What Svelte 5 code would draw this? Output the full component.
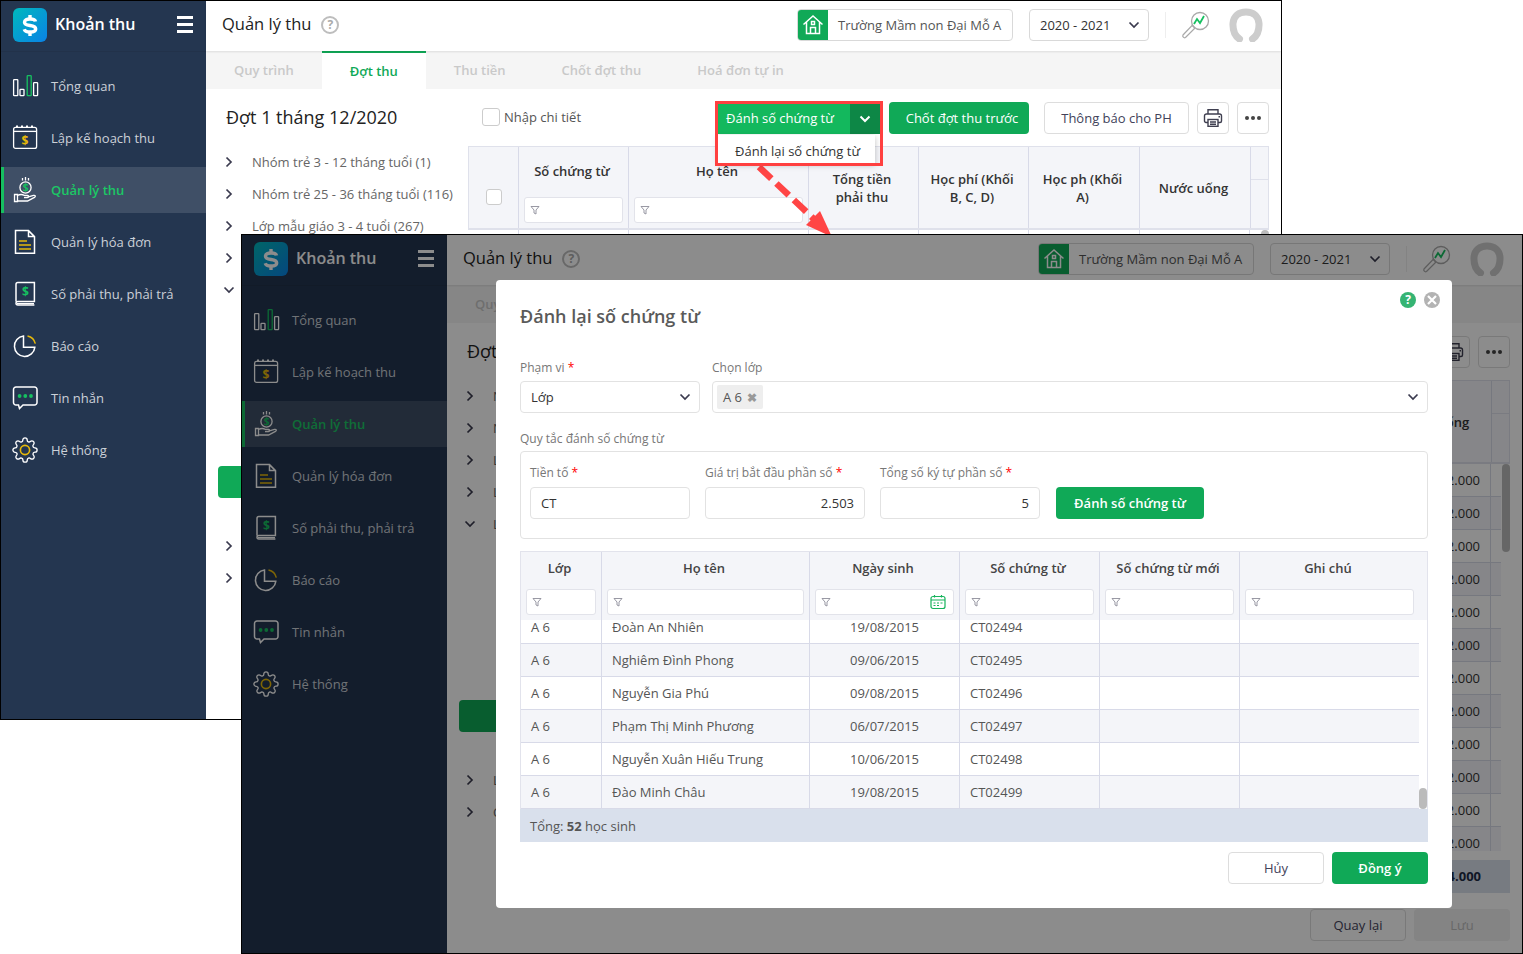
<script>
  const menu = [
    ['bars', 'Tổng quan'],
    ['plan', 'Lập kế hoạch thu'],
    ['hand', 'Quản lý thu'],
    ['doc', 'Quản lý hóa đơn'],
    ['book', 'Số phải thu, phải trả'],
    ['pie', 'Báo cáo'],
    ['chat', 'Tin nhắn'],
    ['gear', 'Hệ thống']
  ];
  const tabs = ['Quy trình', 'Đợt thu', 'Thu tiền', 'Chốt đợt thu', 'Hoá đơn tự in'];
  const treeTop = [
    'Nhóm trẻ 3 - 12 tháng tuổi (1)',
    'Nhóm trẻ 25 - 36 tháng tuổi (116)',
    'Lớp mẫu giáo 3 - 4 tuổi (267)',
    'Lớp mẫu giáo 4 - 5 tuổi (289)'
  ];
  const treeKids = ['A 1', 'A 2', 'A 3', 'A 4', 'A 5', 'A 6', 'A 7'];
  const treeEnd = ['Lớp ghép (12)', 'Chưa xếp lớp (3)'];
  const bodyRows = Array.from({ length: 12 }, (_, i) => i);
  const students = [
    ['Đoàn An Nhiên', '19/08/2015', 'CT02494'],
    ['Nghiêm Đình Phong', '09/06/2015', 'CT02495'],
    ['Nguyễn Gia Phú', '09/08/2015', 'CT02496'],
    ['Phạm Thị Minh Phương', '06/07/2015', 'CT02497'],
    ['Nguyễn Xuân Hiếu Trung', '10/06/2015', 'CT02498'],
    ['Đào Minh Châu', '19/08/2015', 'CT02499']
  ];
  const modalCols = ['Lớp', 'Họ tên', 'Ngày sinh', 'Số chứng từ', 'Số chứng từ mới', 'Ghi chú'];
</script>

{#snippet chevron(dir)}
  <svg class="chev" width="12" height="12" viewBox="0 0 12 12">
    {#if dir === 'right'}
      <polyline points="3.5,1.5 8,6 3.5,10.5" />
    {:else}
      <polyline points="1.5,3.5 6,8 10.5,3.5" />
    {/if}
  </svg>
{/snippet}

{#snippet funnel()}
  <svg class="funnel" width="10" height="10" viewBox="0 0 10 10">
    <polygon points="1,1.5 9,1.5 6,5 6,9 4,8 4,5" />
  </svg>
{/snippet}

{#snippet icon(n)}
  <svg class="mi" width="28" height="28" viewBox="0 0 28 28" fill="none" stroke="#fff" stroke-width="1.3">
    {#if n === 'bars'}
      <rect x="2.6" y="7.6" width="4.2" height="16" rx=".6" />
      <rect x="9" y="17.4" width="4" height="6.2" rx=".6" />
      <rect x="16.2" y="3.6" width="4" height="20" rx=".6" stroke="#16c060" />
      <rect x="22.6" y="10.6" width="4" height="13" rx=".6" />
    {:else if n === 'plan'}
      <rect x="2.6" y="3.4" width="23" height="21" rx="2" />
      <line x1="2.6" y1="7.4" x2="25.6" y2="7.4" />
      <line x1="5" y1="2.4" x2="23" y2="2.4" stroke-dasharray="2 3" stroke-width="2" />
      <text x="14" y="20.6" class="sym" fill="#e5b80b" stroke="none">$</text>
    {:else if n === 'hand'}
      <circle cx="14.5" cy="11.5" r="5.6" />
      <text x="14.5" y="15" class="sym small" fill="#16c060" stroke="none">$</text>
      <path d="M11.5 4.6V2M14.5 4.6V1M17.5 4.6V2" />
      <path d="M3.5 18.5h3v7h-3zM6.5 19.5c3-1.6 5-1.2 7 0h3c1.6 0 1.6 2.2 0 2.2h-3.5M16.5 21.2l6-1.8c1.8-.4 2.5 1 1 2l-7 3.6h-10" />
    {:else if n === 'doc'}
      <path d="M4.5 2.6h13l6 6v16.6h-19zM17.5 2.6v6h6" stroke-width="1.5" />
      <path d="M8 13h8M8 17h12M8 21h12" stroke="#e5b80b" stroke-width="1.5" />
    {:else if n === 'book'}
      <path d="M5 21.6V4.5c0-1 .7-1.9 1.8-1.9h16.6v19H6.8c-2.4 0-2.4 3.4 0 3.4h16.6" stroke-width="1.5" />
      <path d="M6 23.6h17" />
      <text x="14.4" y="15.6" class="sym" fill="#16c060" stroke="none">$</text>
    {:else if n === 'pie'}
      <path d="M12.5 4.1a10.2 10.2 0 1 0 11.3 11.2H12.5z" stroke-width="1.5" />
      <path d="M16.5 3.9a10 10 0 0 1 7.8 7.8" stroke="#e5b80b" stroke-width="1.5" />
    {:else if n === 'chat'}
      <path d="M5 3h18.5a2.5 2.5 0 0 1 2.5 2.5v13a2.5 2.5 0 0 1-2.5 2.5H12l-3.5 3.5-1-3.5H5a2.5 2.5 0 0 1-2.5-2.5v-13A2.5 2.5 0 0 1 5 3z" stroke-width="1.5" />
      <circle cx="8.6" cy="12" r="1.9" fill="#16c060" stroke="none" />
      <circle cx="14.3" cy="12" r="1.9" fill="#16c060" stroke="none" />
      <circle cx="20" cy="12" r="1.9" fill="#16c060" stroke="none" />
    {:else}
      <g transform="translate(.8 .8) scale(1.1)">
        <path stroke-width="1.2" d="M19.4 15a1.65 1.65 0 0 0 .33 1.82l.06.06a2 2 0 0 1 0 2.83 2 2 0 0 1-2.83 0l-.06-.06a1.65 1.65 0 0 0-1.82-.33 1.65 1.65 0 0 0-1 1.51V21a2 2 0 0 1-2 2 2 2 0 0 1-2-2v-.09A1.65 1.65 0 0 0 9 19.4a1.65 1.65 0 0 0-1.82.33l-.06.06a2 2 0 0 1-2.83 0 2 2 0 0 1 0-2.83l.06-.06a1.65 1.65 0 0 0 .33-1.82 1.65 1.65 0 0 0-1.51-1H3a2 2 0 0 1-2-2 2 2 0 0 1 2-2h.09A1.65 1.65 0 0 0 4.6 9a1.65 1.65 0 0 0-.33-1.82l-.06-.06a2 2 0 0 1 0-2.83 2 2 0 0 1 2.83 0l.06.06a1.65 1.65 0 0 0 1.82.33H9a1.65 1.65 0 0 0 1-1.51V3a2 2 0 0 1 2-2 2 2 0 0 1 2 2v.09a1.65 1.65 0 0 0 1 1.51 1.65 1.65 0 0 0 1.82-.33l.06-.06a2 2 0 0 1 2.83 0 2 2 0 0 1 0 2.83l-.06.06a1.65 1.65 0 0 0-.33 1.82V9a1.65 1.65 0 0 0 1.51 1H21a2 2 0 0 1 2 2 2 2 0 0 1-2 2h-.09a1.65 1.65 0 0 0-1.51 1z" />
        <circle cx="12" cy="12" r="4.2" stroke="#e5b80b" stroke-width="1.5" />
      </g>
    {/if}
  </svg>
{/snippet}

{#snippet appWindow(front)}
  <div class="side">
    <div class="brand">
      <div class="logo">
        <svg width="34" height="34" viewBox="0 0 34 34" fill="none" stroke="#fff" stroke-width="3.4">
          <path d="M22.5 13.5c-.3-1.500-2.200-2.500-5.500-2.500-3.200 0-5.500 1-5.500 3.200 0 4.800 11.200 1.800 11.200 6.700 0 2.200-2.500 3.100-5.700 3.100-3 0-5.200-1-5.800-2.800" />
          <path d="M17 7v4M17 24v4" />
        </svg>
      </div>
      <span class="brand-name">Khoản thu</span>
      <div class="burger"><i></i><i></i><i></i></div>
    </div>
    <nav class="menu">
      {#each menu as m, i}
        <div class="item" class:on={i === 2}>
          {@render icon(m[0])}
          <span>{m[1]}</span>
        </div>
      {/each}
    </nav>
  </div>

  <div class="main">
    <header class="top">
      <span class="page-title">Quản lý thu</span>
      <span class="q">?</span>
      <div class="spacer"></div>
      <div class="school">
        <div class="home">
          <svg width="22" height="22" viewBox="0 0 22 22" fill="none" stroke="#fff" stroke-width="1.5">
            <path d="M1.5 10.5 11 2l9.500 8.500M4.500 8v11.500h13V8" />
            <path d="M8.500 19.500v-6h5v6" />
            <rect x="9.500" y="7.500" width="3" height="3" />
          </svg>
        </div>
        <span>Trường Mầm non Đại Mỗ A</span>
      </div>
      <div class="year"><span>2020 - 2021</span>{@render chevron('down')}</div>
      <div class="vline"></div>
      <svg class="analyze" width="30" height="30" viewBox="0 0 30 30" fill="none">
        <circle cx="19" cy="11" r="8.500" stroke="#a9a9a9" stroke-width="1.3" />
        <polyline points="13,14 16,9 19,13 23,6" stroke="#16c060" stroke-width="1.8" />
        <path d="M13 17l-2-1.500-9 9.500c-1 1.500 1 3.500 2.500 2.500L13.500 18.500z" stroke="#a9a9a9" stroke-width="1.2" />
      </svg>
      <svg class="avatar" width="34" height="34" viewBox="0 0 34 34" fill="none">
        <path d="M10.500 31C4.500 27 3.800 20 4 15.500 4.500 8 10 4 17 4s12.500 4 13 11.500c.2 4.500-.5 11.500-6.500 15.500" stroke="#cdcdcd" stroke-width="7" stroke-linecap="round" />
      </svg>
    </header>

    <div class="tabs">
      {#each tabs as t, i}
        <div class="tab" class:active={i === 1}>{t}</div>
      {/each}
    </div>

    <div class="toolbar">
      <div class="round-name">Đợt 1 tháng 12/2020</div>
      <label class="check"><i class="box"></i>Nhập chi tiết</label>
      <div class="spacer"></div>
      <div class="split">
        <div class="split-main">Đánh số chứng từ</div>
        <div class="split-arrow">
          <svg width="12" height="12" viewBox="0 0 12 12" fill="none" stroke="#fff" stroke-width="2"><polyline points="1.5,3.5 6,8 10.5,3.5" /></svg>
        </div>
        {#if !front}
          <div class="dropdown">Đánh lại số chứng từ</div>
          <div class="redbox"></div>
        {/if}
      </div>
      <button class="btn green prev">Chốt đợt thu trước</button>
      <button class="btn ghost notify">Thông báo cho PH</button>
      <button class="btn ghost square">
        <svg width="20" height="20" viewBox="0 0 20 20" fill="none" stroke="#3f3f50" stroke-width="1.4">
          <path d="M5 6V1.700h10V6" />
          <path d="M5 14.500H3A1.500 1.500 0 0 1 1.500 13V8A2 2 0 0 1 3.500 6h13a2 2 0 0 1 2 2v5a1.500 1.500 0 0 1-1.500 1.500h-2" />
          <rect x="5" y="11.500" width="10" height="6.800" />
          <path d="M7 14h6M7 16.200h6M15.500 8.800h1.500" />
        </svg>
      </button>
      <button class="btn ghost square dots"><i></i><i></i><i></i></button>
    </div>

    <div class="work">
      <div class="tree">
        {#each treeTop as t}
          <div class="node">{@render chevron('right')}<span>{t}</span></div>
        {/each}
        <div class="node">{@render chevron('down')}<span>Lớp mẫu giáo 5 - 6 tuổi (301)</span></div>
        {#each treeKids as k, i}
          <div class="kid" class:sel={i === 5}><span>{k}</span></div>
        {/each}
        {#each treeEnd as t}
          <div class="node">{@render chevron('right')}<span>{t}</span></div>
        {/each}
      </div>

      <div class="grid-wrap">
        <div class="mt">
          <div class="mt-head">
            <div class="th c-mid first-col"><i class="box small"></i></div>
            <div class="th stack"><b>Số chứng từ</b><div class="filter">{@render funnel()}</div></div>
            <div class="th stack"><b>Họ tên</b><div class="filter">{@render funnel()}</div></div>
            <div class="th c-mid"><b>Tổng tiền<br />phải thu</b></div>
            <div class="th c-mid"><b>Học phí (Khối<br />B, C, D)</b></div>
            <div class="th c-mid"><b>Học ph (Khối<br />A)</b></div>
            <div class="th c-mid"><b>Nước uống</b></div>
            <div class="th gutter"><i></i></div>
          </div>
          <div class="mt-body">
            <div class="mt-rows">
              {#each bodyRows as r}
                <div class="mt-row" class:zebra={r % 2 === 1}>
                  <div></div><div></div><div></div><div></div><div></div><div></div>
                  <div class="num">132.000</div>
                </div>
              {/each}
            </div>
            <div class="mt-thumb"></div>
          </div>
          <div class="mt-foot"><b>1.584.000</b></div>
        </div>
        <div class="page-actions">
          <button class="btn ghost wide">Quay lại</button>
          <button class="btn muted wide">Lưu</button>
        </div>
      </div>
    </div>
  </div>
{/snippet}

<div class="desk">
  <section class="win first">
    {@render appWindow(false)}
    <svg class="arrow" width="100" height="90" viewBox="0 0 100 90" fill="none">
      <line x1="5" y1="2" x2="62" y2="56" stroke="#ff4545" stroke-width="6.5" stroke-dasharray="17 7" />
      <polygon points="78,72 52,60 66,46" fill="#ff4545" />
    </svg>
  </section>

  <section class="win second">
    {@render appWindow(true)}
    <div class="overlay">
      <div class="modal">
        <div class="modal-icons">
          <span class="mi-help">?</span>
          <span class="mi-close">
            <svg width="10" height="10" viewBox="0 0 10 10" stroke="#fff" stroke-width="2.2"><path d="M1 1l8 8M9 1l-8 8" /></svg>
          </span>
        </div>
        <h2>Đánh lại số chứng từ</h2>

        <div class="form-row">
          <div class="f scope">
            <div class="lbl">Phạm vi <em>*</em></div>
            <div class="ctl select"><span>Lớp</span>{@render chevron('down')}</div>
          </div>
          <div class="f classes">
            <div class="lbl">Chọn lớp</div>
            <div class="ctl select tags">
              <span class="tag">A 6 <b>✖</b></span>
              {@render chevron('down')}
            </div>
          </div>
        </div>

        <div class="lbl rule-lbl">Quy tắc đánh số chứng từ</div>
        <div class="rule">
          <div class="f wide160">
            <div class="lbl">Tiền tố <em>*</em></div>
            <div class="ctl"><span>CT</span></div>
          </div>
          <div class="f wide160">
            <div class="lbl">Giá trị bắt đầu phần số <em>*</em></div>
            <div class="ctl end"><span>2.503</span></div>
          </div>
          <div class="f wide160">
            <div class="lbl">Tổng số ký tự phần số <em>*</em></div>
            <div class="ctl end"><span>5</span></div>
          </div>
          <button class="btn green number">Đánh số chứng từ</button>
        </div>

        <div class="st">
          <div class="st-head">
            {#each modalCols as c, i}
              <div class="st-th">
                <b>{c}</b>
                <div class="filter">
                  {@render funnel()}
                  {#if i === 2}
                    <svg class="cal" width="16" height="16" viewBox="0 0 16 16" fill="none" stroke="#16b35c" stroke-width="1.2">
                      <rect x="1" y="2.500" width="14" height="12" rx="2" />
                      <path d="M1 6h14M4.500 1v2.500M11.500 1v2.500" />
                      <path d="M3.500 9h2M7 9h2M10.500 9h2M3.500 11.500h2M7 11.500h2" />
                    </svg>
                  {/if}
                </div>
              </div>
            {/each}
          </div>
          <div class="st-body">
            <div class="st-rows">
              {#each students as s, i}
                <div class="st-row" class:zebra={i % 2 === 1}>
                  <div>A 6</div>
                  <div>{s[0]}</div>
                  <div class="mid">{s[1]}</div>
                  <div>{s[2]}</div>
                  <div></div>
                  <div></div>
                </div>
              {/each}
            </div>
            <div class="st-thumb"></div>
          </div>
          <div class="st-foot">Tổng: <b>52</b> học sinh</div>
        </div>

        <div class="modal-actions">
          <button class="btn ghost wide">Hủy</button>
          <button class="btn green wide strong">Đồng ý</button>
        </div>
      </div>
    </div>
  </section>
</div>

<style>
  :global(body) {
    margin: 0;
    background: #fff;
  }
  .desk {
    position: relative;
    width: 1523px;
    height: 954px;
    overflow: hidden;
    font: 13px/18px "Open Sans", sans-serif;
    color: #333;
  }
  .win {
    position: absolute;
    box-sizing: border-box;
    width: 1282px;
    height: 720px;
    border: 1px solid #000;
    background: #fff;
    display: flex;
    overflow: hidden;
  }
  .first { left: 0; top: 0; }
  .second { left: 241px; top: 234px; }
  .arrow {
    position: absolute;
    left: 753px;
    top: 164px;
  }

  .side {
    width: 205px;
    flex: none;
    background: #243650;
    color: #ccd1d8;
  }
  .brand {
    height: 50px;
    box-sizing: content-box;
    display: flex;
    align-items: flex-start;
    padding-left: 12px;
    border-bottom: 1px solid #22324a;
  }
  .logo {
    width: 34px;
    height: 34px;
    margin-top: 7px;
    border-radius: 6px;
    background: linear-gradient(135deg, #00b9bd, #0a82e6);
  }
  .logo svg { display: block; }
  .brand-name {
    margin: 12px 0 0 8px;
    width: 122px;
    font-size: 16px;
    line-height: 22px;
    font-weight: 600;
    color: #fff;
  }
  .burger {
    display: flex;
    flex-direction: column;
    gap: 4px;
    margin-top: 15px;
  }
  .burger i {
    width: 16px;
    height: 3px;
    background: #fff;
    display: block;
  }
  .menu {
    padding-top: 11px;
    display: flex;
    flex-direction: column;
    gap: 6px;
  }
  .item {
    height: 46px;
    display: flex;
    align-items: center;
    gap: 12px;
    padding-left: 10px;
  }
  .item.on {
    background: #3f4f66;
    box-shadow: inset 3px 0 0 #16c060;
    color: #1cc765;
    font-weight: 600;
  }
  .mi { flex: none; }
  .sym {
    font: 700 12px "Open Sans", sans-serif;
    text-anchor: middle;
  }
  .sym.small { font-size: 10px; }

  .main {
    flex: 1;
    min-width: 0;
    display: flex;
    flex-direction: column;
  }
  .top {
    height: 50px;
    flex: none;
    box-sizing: border-box;
    padding: 0 0 3px 16px;
    display: flex;
    align-items: center;
    box-shadow: 0 1px 2px rgba(0, 0, 0, 0.1);
    position: relative;
  }
  .page-title {
    font-size: 16.5px;
    line-height: 22px;
    margin-bottom: 1px;
    color: #222;
  }
  .q {
    width: 14px;
    height: 14px;
    margin-left: 10px;
    border: 2px solid #bdbdbd;
    border-radius: 50%;
    color: #aaa;
    font-size: 12px;
    font-weight: 700;
    line-height: 14px;
    text-align: center;
  }
  .spacer { flex: 1; }
  .school {
    box-sizing: border-box;
    width: 216px;
    height: 32px;
    display: flex;
    align-items: center;
    border: 1px solid #d9d9d9;
    border-radius: 4px;
    overflow: hidden;
    color: #555;
  }
  .home {
    width: 30px;
    height: 32px;
    flex: none;
    display: flex;
    align-items: center;
    justify-content: center;
    background: #10a957;
    margin-right: 10px;
  }
  .year {
    box-sizing: border-box;
    width: 120px;
    height: 32px;
    margin-left: 16px;
    padding: 0 8px 0 10px;
    display: flex;
    align-items: center;
    justify-content: space-between;
    border: 1px solid #d9d9d9;
    border-radius: 4px;
  }
  .vline {
    width: 1px;
    height: 26px;
    margin-left: 16px;
    background: #eee;
  }
  .analyze { margin-left: 15px; }
  .avatar { margin: 0 18px 0 18px; }
  .chev {
    flex: none;
    fill: none;
    stroke: #3a3a4e;
    stroke-width: 1.7;
  }

  .tabs {
    height: 38px;
    flex: none;
    display: flex;
    background: #f5f5f5;
  }
  .tab {
    padding: 0 28px;
    line-height: 38px;
    font-weight: 600;
    color: #c9c9c9;
  }
  .tab.active {
    background: #fff;
    color: #10a957;
    border-top: 2px solid #10a957;
    line-height: 36px;
    height: 36px;
  }

  .toolbar {
    height: 57px;
    flex: none;
    box-sizing: border-box;
    padding: 13px 12px 0 20px;
    display: flex;
    align-items: flex-start;
  }
  .round-name {
    width: 256px;
    font-size: 18px;
    line-height: 30px;
    color: #222;
  }
  .check {
    display: flex;
    align-items: center;
    gap: 4px;
    height: 30px;
    color: #555;
  }
  .box {
    box-sizing: border-box;
    display: block;
    width: 18px;
    height: 18px;
    background: #fff;
    border: 1px solid #ccc;
    border-radius: 3px;
  }
  .box.small {
    width: 16px;
    height: 16px;
    margin-top: 18px;
  }
  .split {
    position: relative;
    display: flex;
    height: 30px;
    margin: 2px 9px 0 0;
    color: #fff;
  }
  .split-main {
    width: 132px;
    box-sizing: border-box;
    padding-left: 8px;
    line-height: 28px;
    background: #13b85d;
  }
  .split-arrow {
    width: 30px;
    display: flex;
    align-items: center;
    justify-content: center;
    background: #0d8746;
  }
  .dropdown {
    position: absolute;
    left: 0;
    top: 31px;
    width: 157px;
    height: 28px;
    box-sizing: border-box;
    padding-left: 17px;
    line-height: 32px;
    background: #fff;
    color: #333;
    box-shadow: 0 2px 6px rgba(0, 0, 0, 0.25);
    z-index: 3;
  }
  .redbox {
    position: absolute;
    left: -3px;
    top: -3px;
    width: 162px;
    height: 59px;
    border: 3px solid #ff4040;
    z-index: 4;
  }
  .btn {
    box-sizing: border-box;
    height: 32px;
    border-radius: 4px;
    font: 13px/18px "Open Sans", sans-serif;
    padding: 0;
    flex: none;
  }
  .green {
    background: #10a957;
    border: 0;
    color: #fff;
  }
  .ghost {
    background: #fff;
    border: 1px solid #ddd;
    color: #42425a;
  }
  .muted {
    background: #f0f0f0;
    border: 0;
    color: #bdbdbd;
  }
  .prev { width: 140px; padding-left: 6px; }
  .notify { width: 145px; margin-left: 15px; }
  .square {
    width: 32px;
    margin-left: 8px;
    display: flex;
    align-items: center;
    justify-content: center;
  }
  .dots { gap: 2px; }
  .dots i {
    width: 4px;
    height: 4px;
    border-radius: 50%;
    background: #444;
    display: block;
  }

  .work {
    flex: 1;
    min-height: 0;
    display: flex;
  }
  .tree {
    width: 262px;
    flex: none;
    box-sizing: border-box;
    padding-left: 17px;
  }
  .node {
    height: 32px;
    display: flex;
    align-items: center;
    gap: 17px;
    color: #666;
    white-space: nowrap;
  }
  .kid {
    height: 32px;
    margin-left: -5px;
    padding-left: 42px;
    line-height: 32px;
    color: #666;
    border-radius: 4px;
  }
  .kid.sel {
    background: #10a957;
    color: #fff;
  }

  .grid-wrap {
    width: 801px;
    flex: none;
  }
  .mt {
    box-sizing: border-box;
    width: 801px;
  }
  .mt-head, .mt-row {
    display: grid;
    grid-template-columns: 50px 110px 180px 110px 110px 111px 111px 1fr;
  }
  .mt-head {
    height: 84px;
    box-sizing: border-box;
    background: #f4f5f9;
    border: 1px solid #dfe1eb;
    border-bottom-width: 2px;
  }
  .th {
    box-sizing: border-box;
    border-right: 1px solid #d8dae8;
    color: #333;
    text-align: center;
  }
  .th b, .st-th b { font-weight: 600; }
  .th.c-mid {
    display: flex;
    align-items: center;
    justify-content: center;
    padding-right: 3px;
  }
  .th.first-col { padding-right: 0; }
  .th.stack {
    padding: 15px 5px 0;
  }
  .th.stack b { display: block; margin-bottom: 17px; padding-right: 3px; }
  .th.gutter { border-right: 0; }
  .th.gutter i {
    display: block;
    height: 32px;
    border-bottom: 1px solid #dfe1eb;
  }
  .filter {
    box-sizing: border-box;
    height: 26px;
    padding: 0 5px;
    background: #fff;
    border: 1px solid #e2e3ea;
    border-radius: 3px;
    display: flex;
    align-items: center;
    justify-content: space-between;
    text-align: left;
  }
  .funnel {
    fill: none;
    stroke: #8d8d9a;
    stroke-width: 0.9;
  }
  .cal { margin-right: 2px; }
  .mt-body {
    position: relative;
    height: 387px;
    overflow: hidden;
  }
  .mt-rows { margin-right: 9px; }
  .mt-row {
    height: 33px;
    box-sizing: border-box;
    border-bottom: 1px solid #d8dae8;
    grid-template-columns: 51px 110px 180px 110px 110px 111px 110px;
  }
  .mt-row > div {
    border-right: 1px solid #d8dae8;
  }
  .mt-row.zebra, .st-row.zebra { background: #f4f5f9; }
  .num {
    text-align: right;
    padding-right: 10px;
    line-height: 32px;
  }
  .mt-thumb {
    position: absolute;
    right: 0;
    top: 0;
    width: 8px;
    height: 88px;
    border-radius: 4px;
    background: #bbb;
  }
  .mt-foot {
    height: 33px;
    margin-top: 9px;
    background: #d9e0ec;
    box-sizing: border-box;
    padding-right: 29px;
    text-align: right;
    line-height: 33px;
  }
  .mt-foot b { color: #1d2a44; }
  .page-actions {
    display: flex;
    justify-content: flex-end;
    gap: 8px;
    margin-top: 16px;
  }
  .wide { width: 96px; }

  .overlay {
    position: absolute;
    inset: 0;
    background: rgba(0, 0, 0, 0.45);
  }
  .modal {
    position: absolute;
    left: 254px;
    top: 45px;
    width: 956px;
    height: 628px;
    box-sizing: border-box;
    padding: 24px;
    background: #fff;
    border-radius: 4px;
  }
  .modal-icons {
    position: absolute;
    right: 12px;
    top: 12px;
    display: flex;
    gap: 8px;
  }
  .mi-help, .mi-close {
    width: 16px;
    height: 16px;
    border-radius: 50%;
    display: flex;
    align-items: center;
    justify-content: center;
    color: #fff;
    font-size: 12px;
    font-weight: 700;
  }
  .mi-help { background: #35b473; }
  .mi-close { background: #b3b3b3; }
  h2 {
    margin: 0;
    font-size: 18px;
    font-weight: 600;
    line-height: 24px;
    color: #5a5a5a;
  }
  .form-row {
    display: flex;
    gap: 12px;
    margin-top: 30px;
  }
  .scope { width: 180px; }
  .classes { flex: 1; }
  .lbl {
    height: 18px;
    margin-bottom: 5px;
    color: #777;
    font-size: 12px;
    line-height: 20px;
    white-space: nowrap;
  }
  .lbl em {
    color: #f00;
    font-style: normal;
  }
  .ctl {
    box-sizing: border-box;
    height: 32px;
    padding: 0 10px;
    display: flex;
    align-items: center;
    border: 1px solid #e2e2e2;
    border-radius: 4px;
    color: #333;
  }
  .select { justify-content: space-between; padding-right: 8px; }
  .tags { padding-left: 4px; }
  .tag {
    height: 24px;
    padding: 0 6px;
    line-height: 24px;
    background: #eee;
    border-radius: 2px;
    color: #555;
  }
  .tag b {
    margin-left: 2px;
    color: #999;
    font-size: 12px;
  }
  .end { justify-content: flex-end; }
  .rule-lbl {
    margin-top: 16px;
    margin-bottom: 4px;
  }
  .rule {
    box-sizing: border-box;
    height: 88px;
    padding: 11px 9px 0;
    display: flex;
    align-items: flex-start;
    gap: 15px;
    border: 1px solid #e2e2e2;
    border-radius: 4px;
  }
  .rule .lbl { margin-bottom: 6px; }
  .wide160 { width: 160px; }
  .number {
    width: 148px;
    margin: 24px 0 0 1px;
    font-weight: 600;
  }
  .st {
    margin-top: 12px;
  }
  .st-head, .st-row {
    display: grid;
    grid-template-columns: 81px 208px 150px 140px 140px 179px;
  }
  .st-head {
    box-sizing: border-box;
    height: 69px;
    background: #f4f5f9;
    border: 1px solid #e2e3ec;
    border-bottom: 0;
  }
  .st-th {
    box-sizing: border-box;
    padding: 7px 5px 0;
    border-right: 1px solid #d8dae8;
    text-align: center;
    color: #444;
  }
  .st-th:last-child {
    border-right: 0;
  }
  .st-th b {
    display: block;
    margin-bottom: 12px;
    padding-right: 3px;
  }
  .st-body {
    position: relative;
    height: 189px;
    overflow: hidden;
    border: 1px solid #e2e3ec;
    border-width: 0 1px;
  }
  .st-rows {
    width: 898px;
    margin-top: -9px;
  }
  .st-row {
    height: 33px;
    box-sizing: border-box;
    border-bottom: 1px solid #d8dae8;
  }
  .st-row > div {
    box-sizing: border-box;
    padding-left: 10px;
    line-height: 32px;
    color: #555;
    border-right: 1px solid #d8dae8;
  }
  .st-row > div:last-child { border-right: 0; }
  .st-row > div.mid {
    padding: 0;
    text-align: center;
  }
  .st-thumb {
    position: absolute;
    right: 0;
    bottom: 0;
    width: 8px;
    height: 21px;
    border-radius: 4px;
    background: #bbb;
  }
  .st-foot {
    box-sizing: border-box;
    height: 33px;
    padding-left: 10px;
    line-height: 35px;
    background: #d9e0ec;
    color: #555;
  }
  .st-foot b { font-weight: 700; }
  .modal-actions {
    display: flex;
    justify-content: flex-end;
    gap: 8px;
    margin-top: 10px;
  }
  .strong { font-weight: 600; }
</style>
